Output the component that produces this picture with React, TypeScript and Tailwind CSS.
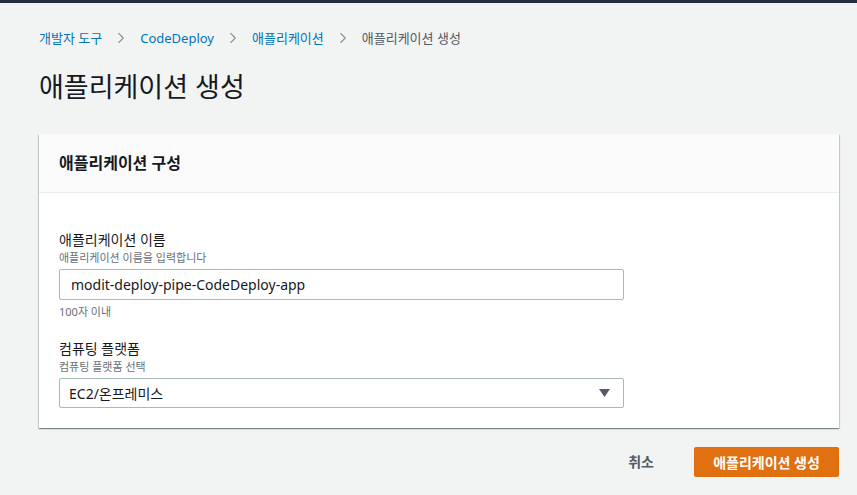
import { ChevronRight } from "lucide-react";

const font = { fontFamily: '"Noto Sans", "Noto Sans CJK KR", sans-serif' };

function Crumb({ label, last }: { label: string; last?: boolean }) {
  return (
    <>
      <span className={last ? "text-[#545b64]" : "text-[#0073bb]"}>{label}</span>
      {!last && <ChevronRight className="mx-[10px] h-[18px] w-[18px] text-[#879596]" strokeWidth={1.5} />}
    </>
  );
}

function Field({
  label,
  desc,
  children,
  hint,
}: {
  label: string;
  desc: string;
  children: React.ReactNode;
  hint?: string;
}) {
  return (
    <div className="flex flex-col">
      <div className="text-[14px] leading-[20px] text-[#16191f]">{label}</div>
      <div className="text-[11px] leading-[16px] text-[#687078]">{desc}</div>
      <div className="mt-[3px]">{children}</div>
      {hint && <div className="mt-[4px] text-[11px] leading-[16px] text-[#687078]">{hint}</div>}
    </div>
  );
}

export default function App() {
  return (
    <div className="min-h-screen bg-[#f2f3f3] text-[#16191f]" style={font}>
      <div className="h-[3px] bg-[#232f3e]" />
      <div className="pl-[39px] pr-[18px]">
        <nav className="flex items-center pt-[25px] text-[13px] leading-[20px]">
          <Crumb label="개발자 도구" />
          <Crumb label="CodeDeploy" />
          <Crumb label="애플리케이션" />
          <Crumb label="애플리케이션 생성" last />
        </nav>
        <h1 className="mt-[22px] text-[27px] leading-[34px] font-normal">애플리케이션 생성</h1>

        <div className="mt-[30px] bg-white shadow-[0_1px_1px_0_rgba(0,28,36,0.3),1px_1px_1px_0_rgba(0,28,36,0.15),-1px_1px_1px_0_rgba(0,28,36,0.15)]">
          <div className="flex h-[59px] items-center border-b border-[#eaeded] bg-[#fafafa] px-[20px]">
            <h2 className="text-[16px] font-bold leading-[22px]">애플리케이션 구성</h2>
          </div>
          <div className="flex flex-col gap-[19px] px-[20px] pt-[37px] pb-[20px]">
            <Field label="애플리케이션 이름" desc="애플리케이션 이름을 입력합니다" hint="100자 이내">
              <div className="flex h-[31px] w-[565px] items-center rounded-[2px] border border-[#aab7b8] px-[11px] text-[14px] text-[#16191f]">
                modit-deploy-pipe-CodeDeploy-app
              </div>
            </Field>
            <Field label="컴퓨팅 플랫폼" desc="컴퓨팅 플랫폼 선택">
              <div className="flex h-[30px] w-[565px] items-center justify-between rounded-[2px] border border-[#aab7b8] pl-[9px] pr-[13px] text-[14px]">
                <span>EC2/온프레미스</span>
                <svg width="11" height="8" viewBox="0 0 11 8">
                  <path d="M0 0h11L5.5 8z" fill="#545b64" />
                </svg>
              </div>
            </Field>
          </div>
        </div>

        <div className="mt-[19px] flex items-center justify-end gap-[22px]">
          <button className="px-[18px] text-[14px] font-bold leading-[20px] text-[#545b64]">취소</button>
          <button className="h-[30px] w-[145px] rounded-[2px] bg-[#e07010] text-[14px] font-bold text-white">
            애플리케이션 생성
          </button>
        </div>
      </div>
    </div>
  );
}
